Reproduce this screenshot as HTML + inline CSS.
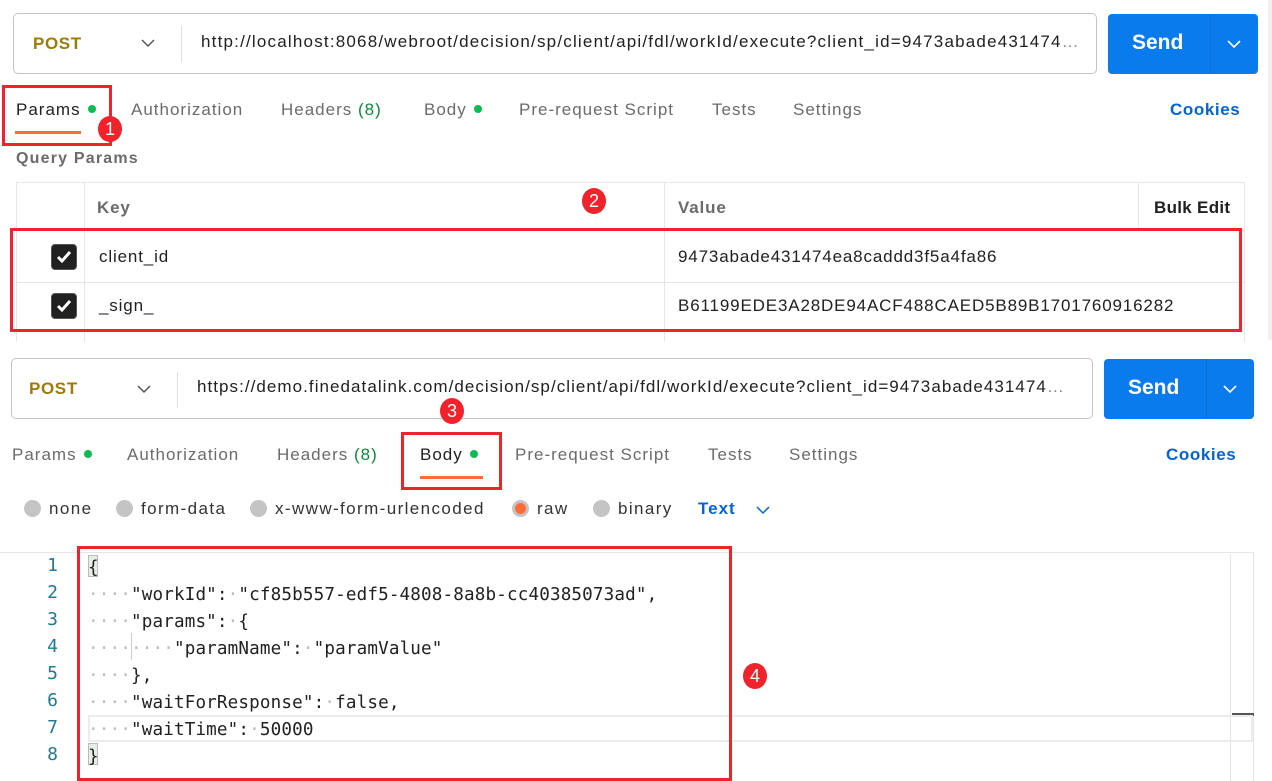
<!DOCTYPE html>
<html><head><meta charset="utf-8"><style>
*{box-sizing:border-box;margin:0;padding:0}
body{width:1272px;height:781px;background:#fff;position:relative;overflow:hidden;font-family:"Liberation Sans",sans-serif;color:#212121}
.a{position:absolute;white-space:nowrap}
.url{border:1px solid #c4c4c4;border-radius:5px;height:61px}
.post{color:#a07a06;font-size:17px;font-weight:bold;letter-spacing:.6px}
.div{position:absolute;width:1px;background:#e0e0e0}
.utext{font-size:17px;color:#212121;letter-spacing:1.2px}
.send{background:#097bed;border-radius:4px;height:60px;width:150px}
.send .t{position:absolute;left:24px;top:17px;color:#fff;font-weight:bold;font-size:21px}
.send .d{position:absolute;left:102px;top:0;width:1px;height:60px;background:#0a6fd6}
.tab{font-size:17px;color:#6b6b6b;letter-spacing:1px}
.dot{display:inline-block;width:8px;height:8px;border-radius:50%;background:#0cbb52;margin-left:7px;vertical-align:2px}
.ck{position:absolute;width:26px;height:26px;border-radius:4px;background:#212121;border:1px solid #555}
.rb{position:absolute;border:3px solid #f0222b}
.badge{position:absolute;width:24px;height:26px;border-radius:50%;background:#f0222b;color:#fff;font-size:18px;text-align:center;line-height:26px}
.radio{position:absolute;width:17px;height:17px;border-radius:50%;background:#c4c4c4}
.rl{font-size:17px;color:#333;letter-spacing:1.4px}
.tt{font-size:17px;letter-spacing:.85px}
.ln{position:absolute;left:38px;width:20px;text-align:right;font-family:"DejaVu Sans Mono",monospace;font-size:18px;color:#237893}
.code{position:absolute;left:88px;font-family:"DejaVu Sans Mono",monospace;font-size:17.6px;letter-spacing:.15px;color:#212121;white-space:pre}
.ws{color:#bbb}
</style></head><body>
<!-- top request -->
<div class="a url" style="left:13px;top:13px;width:1084px"></div>
<div class="a post" style="left:33px;top:34px">POST</div>
<svg class="a" style="left:141px;top:38px" width="14" height="10"><path d="M1 2l6 6 6-6" fill="none" stroke="#555" stroke-width="1.5"/></svg>
<div class="div" style="left:181px;top:26px;height:36px"></div>
<div class="a utext" style="left:201px;top:32px">http://localhost:8068/webroot/decision/sp/client/api/fdl/workId/execute?client_id=9473abade431474<span style="color:#888">…</span></div>
<div class="a send" style="left:1108px;top:14px"><div class="t">Send</div><div class="d"></div><svg class="a" style="left:119px;top:25px" width="14" height="10"><path d="M1 2l6 6 6-6" fill="none" stroke="#fff" stroke-width="1.6"/></svg></div>

<div class="a tab" style="left:16px;top:100px;color:#212121">Params<span class="dot"></span></div>
<div class="a" style="left:15px;top:131px;width:66px;height:3px;background:#ff6c37"></div>
<div class="a tab" style="left:131px;top:100px">Authorization</div>
<div class="a tab" style="left:281px;top:100px">Headers <span style="color:#0b8a3a">(8)</span></div>
<div class="a tab" style="left:424px;top:100px">Body<span class="dot"></span></div>
<div class="a tab" style="left:519px;top:100px">Pre-request Script</div>
<div class="a tab" style="left:712px;top:100px">Tests</div>
<div class="a tab" style="left:793px;top:100px">Settings</div>
<div class="a" style="left:1170px;top:100px;font-size:17px;font-weight:bold;color:#0265d2;letter-spacing:.6px">Cookies</div>
<div class="rb" style="left:2px;top:85px;width:110px;height:61px"></div>
<div class="badge" style="left:98px;top:116px">1</div>

<div class="a" style="left:16px;top:150px;font-size:16px;font-weight:bold;color:#6b6b6b;letter-spacing:1.2px">Query Params</div>
<div class="a" style="left:16px;top:182px;width:1229px;height:160px;border:1px solid #e6e6e6;border-bottom:none"></div>
<div class="div" style="left:84px;top:182px;height:160px;background:#e6e6e6"></div>
<div class="div" style="left:664px;top:182px;height:160px;background:#e6e6e6"></div>
<div class="div" style="left:1138px;top:182px;height:48px;background:#e6e6e6"></div>
<div class="a" style="left:16px;top:230px;width:1229px;height:1px;background:#e6e6e6"></div>
<div class="a" style="left:16px;top:282px;width:1229px;height:1px;background:#e6e6e6"></div>
<div class="a tt" style="left:97px;top:198px;font-weight:bold;color:#6b6b6b">Key</div>
<div class="a tt" style="left:678px;top:198px;font-weight:bold;color:#6b6b6b">Value</div>
<div class="a" style="left:1154px;top:198px;font-size:17px;font-weight:bold;color:#212121;letter-spacing:.3px">Bulk Edit</div>
<div class="ck" style="left:51px;top:244px"><svg width="24" height="24"><path d="M6 12l4 4 8-9" fill="none" stroke="#fff" stroke-width="3"/></svg></div>
<div class="ck" style="left:51px;top:293px"><svg width="24" height="24"><path d="M6 12l4 4 8-9" fill="none" stroke="#fff" stroke-width="3"/></svg></div>
<div class="a tt" style="left:99px;top:247px">client_id</div>
<div class="a tt" style="left:99px;top:296px">_sign_</div>
<div class="a tt" style="left:678px;top:247px">9473abade431474ea8caddd3f5a4fa86</div>
<div class="a tt" style="left:678px;top:296px">B61199EDE3A28DE94ACF488CAED5B89B1701760916282</div>
<div class="rb" style="left:10px;top:228px;width:1232px;height:104px"></div>
<div class="badge" style="left:582px;top:188px">2</div>
<div class="a" style="left:1268px;top:0;width:4px;height:340px;background:#f0f0f0"></div>

<!-- bottom request -->
<div class="a url" style="left:11px;top:358px;width:1082px"></div>
<div class="a post" style="left:29px;top:379px">POST</div>
<svg class="a" style="left:137px;top:384px" width="14" height="10"><path d="M1 2l6 6 6-6" fill="none" stroke="#555" stroke-width="1.5"/></svg>
<div class="div" style="left:177px;top:372px;height:36px"></div>
<div class="a utext" style="left:197px;top:377px;letter-spacing:1.05px">https://demo.finedatalink.com/decision/sp/client/api/fdl/workId/execute?client_id=9473abade431474<span style="color:#888">…</span></div>
<div class="a send" style="left:1104px;top:359px"><div class="t">Send</div><div class="d"></div><svg class="a" style="left:119px;top:25px" width="14" height="10"><path d="M1 2l6 6 6-6" fill="none" stroke="#fff" stroke-width="1.6"/></svg></div>

<div class="a tab" style="left:12px;top:445px">Params<span class="dot"></span></div>
<div class="a tab" style="left:127px;top:445px">Authorization</div>
<div class="a tab" style="left:277px;top:445px">Headers <span style="color:#0b8a3a">(8)</span></div>
<div class="a tab" style="left:420px;top:445px;color:#212121">Body<span class="dot"></span></div>
<div class="a" style="left:420px;top:476px;width:63px;height:3px;background:#ff6c37"></div>
<div class="a tab" style="left:515px;top:445px">Pre-request Script</div>
<div class="a tab" style="left:708px;top:445px">Tests</div>
<div class="a tab" style="left:789px;top:445px">Settings</div>
<div class="a" style="left:1166px;top:445px;font-size:17px;font-weight:bold;color:#0265d2;letter-spacing:.6px">Cookies</div>
<div class="rb" style="left:401px;top:432px;width:101px;height:58px"></div>
<div class="badge" style="left:440px;top:398px">3</div>

<div class="radio" style="left:24px;top:500px"></div><div class="a rl" style="left:49px;top:499px">none</div>
<div class="radio" style="left:116px;top:500px"></div><div class="a rl" style="left:141px;top:499px">form-data</div>
<div class="radio" style="left:250px;top:500px"></div><div class="a rl" style="left:275px;top:499px">x-www-form-urlencoded</div>
<div class="radio" style="left:512px;top:500px;background:#ff6c37;border:3px solid #c4c4c4"></div><div class="a rl" style="left:537px;top:499px">raw</div>
<div class="radio" style="left:593px;top:500px"></div><div class="a rl" style="left:618px;top:499px">binary</div>
<div class="a" style="left:698px;top:499px;font-size:17px;font-weight:bold;color:#0265d2;letter-spacing:1px">Text</div>
<svg class="a" style="left:756px;top:505px" width="14" height="10"><path d="M1 2l6 6 6-6" fill="none" stroke="#0265d2" stroke-width="1.5"/></svg>

<!-- editor -->
<div class="a" style="left:0;top:552px;width:1254px;height:1px;background:#e6e6e6"></div>
<div class="a" style="left:1253px;top:552px;width:1px;height:229px;background:#e6e6e6"></div>
<div class="a" style="left:1230px;top:554px;width:1px;height:227px;background:#e6e6e6"></div>
<div class="a" style="left:1232px;top:713px;width:22px;height:3px;background:#555"></div>
<div class="a" style="left:88px;top:715px;width:1165px;height:27px;border:2px solid #ececec"></div>
<div class="a" style="left:88px;top:555px;width:10px;height:22px;background:#e6efe6;border:1px solid #bbb"></div>
<div class="a" style="left:88px;top:743px;width:10px;height:22px;background:#e6efe6;border:1px solid #bbb"></div>
<div class="a" style="left:131px;top:633px;width:1px;height:27px;background:#ccc"></div>
<div class="ln" style="top:555px">1</div>
<div class="ln" style="top:582px">2</div>
<div class="ln" style="top:609px">3</div>
<div class="ln" style="top:636px">4</div>
<div class="ln" style="top:663px">5</div>
<div class="ln" style="top:690px">6</div>
<div class="ln" style="top:717px">7</div>
<div class="ln" style="top:744px">8</div>
<div class="code" style="top:555px;line-height:27px">{
<span class="ws">····</span>"workId":<span class="ws">·</span>"cf85b557-edf5-4808-8a8b-cc40385073ad",
<span class="ws">····</span>"params":<span class="ws">·</span>{
<span class="ws">········</span>"paramName":<span class="ws">·</span>"paramValue"
<span class="ws">····</span>},
<span class="ws">····</span>"waitForResponse":<span class="ws">·</span>false,
<span class="ws">····</span>"waitTime":<span class="ws">·</span>50000
}</div>
<div class="rb" style="left:77px;top:546px;width:655px;height:235px"></div>
<div class="badge" style="left:743px;top:663px">4</div>
</body></html>
